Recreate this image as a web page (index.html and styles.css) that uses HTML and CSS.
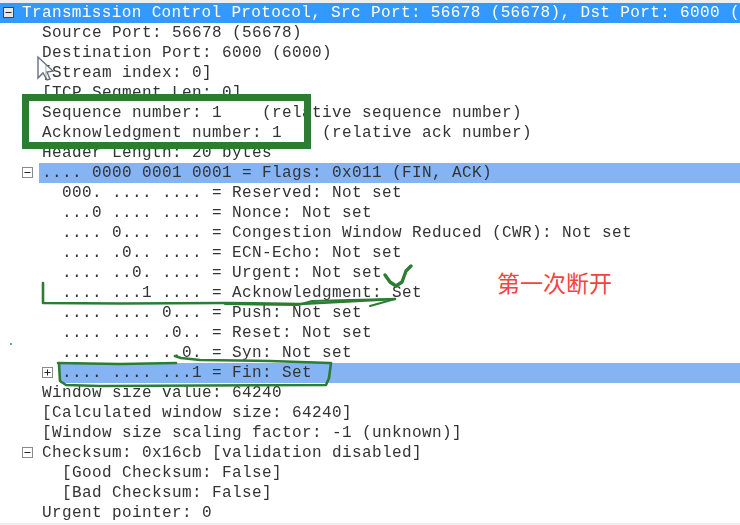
FILE: index.html
```html
<!DOCTYPE html>
<html lang="en">
<head>
<meta charset="utf-8">
<title>TCP packet details</title>
<link rel="stylesheet" href="styles.css">
</head>
<body>
<main class="canvas">
  <ul class="tree">
    <li class="row sel-full"><svg class="tog tog-0" viewBox="0 0 11 11"><rect x=".5" y=".5" width="10" height="10" class="tog-box"/><path d="M2.5 5.5h6" class="tog-mark"/></svg><span class="txt l0">Transmission Control Protocol, Src Port: 56678 (56678), Dst Port: 6000 (</span></li>
    <li class="row"><span class="txt l1">Source Port: 56678 (56678)</span></li>
    <li class="row"><span class="txt l1">Destination Port: 6000 (6000)</span></li>
    <li class="row"><span class="txt l1">[Stream index: 0]</span></li>
    <li class="row"><span class="txt l1">[TCP Segment Len: 0]</span></li>
    <li class="row"><span class="txt l1">Sequence number: 1    (relative sequence number)</span></li>
    <li class="row"><span class="txt l1">Acknowledgment number: 1    (relative ack number)</span></li>
    <li class="row"><span class="txt l1">Header Length: 20 bytes</span></li>
    <li class="row sel-flags"><svg class="tog tog-1" viewBox="0 0 11 11"><rect x=".5" y=".5" width="10" height="10" class="tog-box"/><path d="M2.5 5.5h6" class="tog-mark"/></svg><span class="txt l1">.... 0000 0001 0001 = Flags: 0x011 (FIN, ACK)</span></li>
    <li class="row"><span class="txt l2">000. .... .... = Reserved: Not set</span></li>
    <li class="row"><span class="txt l2">...0 .... .... = Nonce: Not set</span></li>
    <li class="row"><span class="txt l2">.... 0... .... = Congestion Window Reduced (CWR): Not set</span></li>
    <li class="row"><span class="txt l2">.... .0.. .... = ECN-Echo: Not set</span></li>
    <li class="row"><span class="txt l2">.... ..0. .... = Urgent: Not set</span></li>
    <li class="row"><span class="txt l2">.... ...1 .... = Acknowledgment: Set</span></li>
    <li class="row"><span class="txt l2">.... .... 0... = Push: Not set</span></li>
    <li class="row"><span class="txt l2">.... .... .0.. = Reset: Not set</span></li>
    <li class="row"><span class="txt l2">.... .... ..0. = Syn: Not set</span></li>
    <li class="row sel-fin"><svg class="tog tog-2" viewBox="0 0 11 11"><rect x=".5" y=".5" width="10" height="10" class="tog-box"/><path d="M2.5 5.5h6M5.5 2.5v6" class="tog-mark"/></svg><span class="txt l2">.... .... ...1 = Fin: Set</span></li>
    <li class="row"><span class="txt l1">Window size value: 64240</span></li>
    <li class="row"><span class="txt l1">[Calculated window size: 64240]</span></li>
    <li class="row"><span class="txt l1">[Window size scaling factor: -1 (unknown)]</span></li>
    <li class="row"><svg class="tog tog-0b" viewBox="0 0 11 11"><rect x=".5" y=".5" width="10" height="10" class="tog-box"/><path d="M2.5 5.5h6" class="tog-mark"/></svg><span class="txt l1">Checksum: 0x16cb [validation disabled]</span></li>
    <li class="row"><span class="txt l2">[Good Checksum: False]</span></li>
    <li class="row"><span class="txt l2">[Bad Checksum: False]</span></li>
    <li class="row"><span class="txt l1">Urgent pointer: 0</span></li>
  </ul>
  <svg class="ink" viewBox="0 0 740 525" width="740" height="525" aria-hidden="true">
    <rect class="frame" x="25.5" y="97.5" width="282" height="48"/>
    <path class="pen" d="M43 283L43 303L120 303.5L225 303L300 304L395 299"/>
    <path class="pen pen-thin" d="M395 299L350 300L312 301L298 305L225 304"/>
    <path class="pen pen-thin" d="M395 299L370 306"/>
    <path class="pen pen-bold" d="M385 275L390 282L396 286L402 282L406 271L411 266"/>
    <path class="pen" d="M175 356L181 358L200 360L270 361L330 363"/>
    <path class="pen" d="M58 363L120 364L176 363"/>
    <path class="pen" d="M59 364L60 381L66 385L100 386L326 385L329 378L331 363"/>
    <circle class="dot" cx="11" cy="344" r="1"/>
    <path class="cursor" d="M38 57L38 78L43 73L47 80L50 79L47 72L53 71Z"/>
  </svg>
  <p class="note">第一次断开</p>
</main>
</body>
</html>
```
FILE: styles.css
```css
html, body {
  margin: 0;
  padding: 0;
  background: #fff;
}
.canvas {
  position: relative;
  width: 740px;
  height: 525px;
  overflow: hidden;
  background: #fff;
  box-shadow: inset 0 -2px #eeeeee;
}
.tree {
  list-style: none;
  margin: 0;
  padding: 0;
  border-top: 3px solid #eeeeee;
  font-family: "Liberation Mono", "DejaVu Sans Mono", monospace;
  font-size: 16px;
  letter-spacing: 0.4px;
  line-height: 20px;
  color: #333;
}
.row {
  position: relative;
  height: 20px;
  white-space: pre;
  overflow: hidden;
}
.txt {
  display: block;
  filter: blur(0.35px);
}
.l0 {
  padding-left: 22px;
  letter-spacing: 0.37px;
}
.l1 { padding-left: 42px; }
.l2 { padding-left: 62px; }
.sel-full {
  background: #3399ff;
  color: #fff;
}
.sel-flags {
  background: linear-gradient(#84b4f4, #84b4f4) 39px 0 no-repeat;
}
.sel-fin {
  background: linear-gradient(#84b4f4, #84b4f4) 60px 0 no-repeat;
}
.tog {
  position: absolute;
  top: 4px;
  width: 11px;
  height: 11px;
}
.tog-0 { left: 3px; }
.tog-0b { left: 22px; }
.tog-1 { left: 22px; }
.tog-2 { left: 42px; }
.tog-box {
  fill: #fff;
  stroke: #8a8a8a;
}
.tog-0 .tog-box {
  fill: #e6e6e6;
  stroke: #444;
}
.tog-mark {
  fill: none;
  stroke: #222;
}
.ink {
  position: absolute;
  left: 0;
  top: 0;
}
.frame {
  fill: none;
  stroke: #2c7d33;
  stroke-width: 7;
}
.pen {
  fill: none;
  stroke: #2c7d33;
  stroke-width: 2.6;
  stroke-linecap: round;
  stroke-linejoin: round;
}
.pen-thin { stroke-width: 2; }
.pen-bold { stroke-width: 3.4; }
.dot { fill: #2c9d43; }
.cursor {
  fill: #fff;
  fill-opacity: 0.7;
  stroke: #667080;
  stroke-width: 1.4;
}
.note {
  position: absolute;
  left: 497px;
  top: 268px;
  margin: 0;
  font-family: "Noto Sans CJK SC", sans-serif;
  font-size: 23px;
  line-height: 28px;
  color: #f4433f;
}
```
